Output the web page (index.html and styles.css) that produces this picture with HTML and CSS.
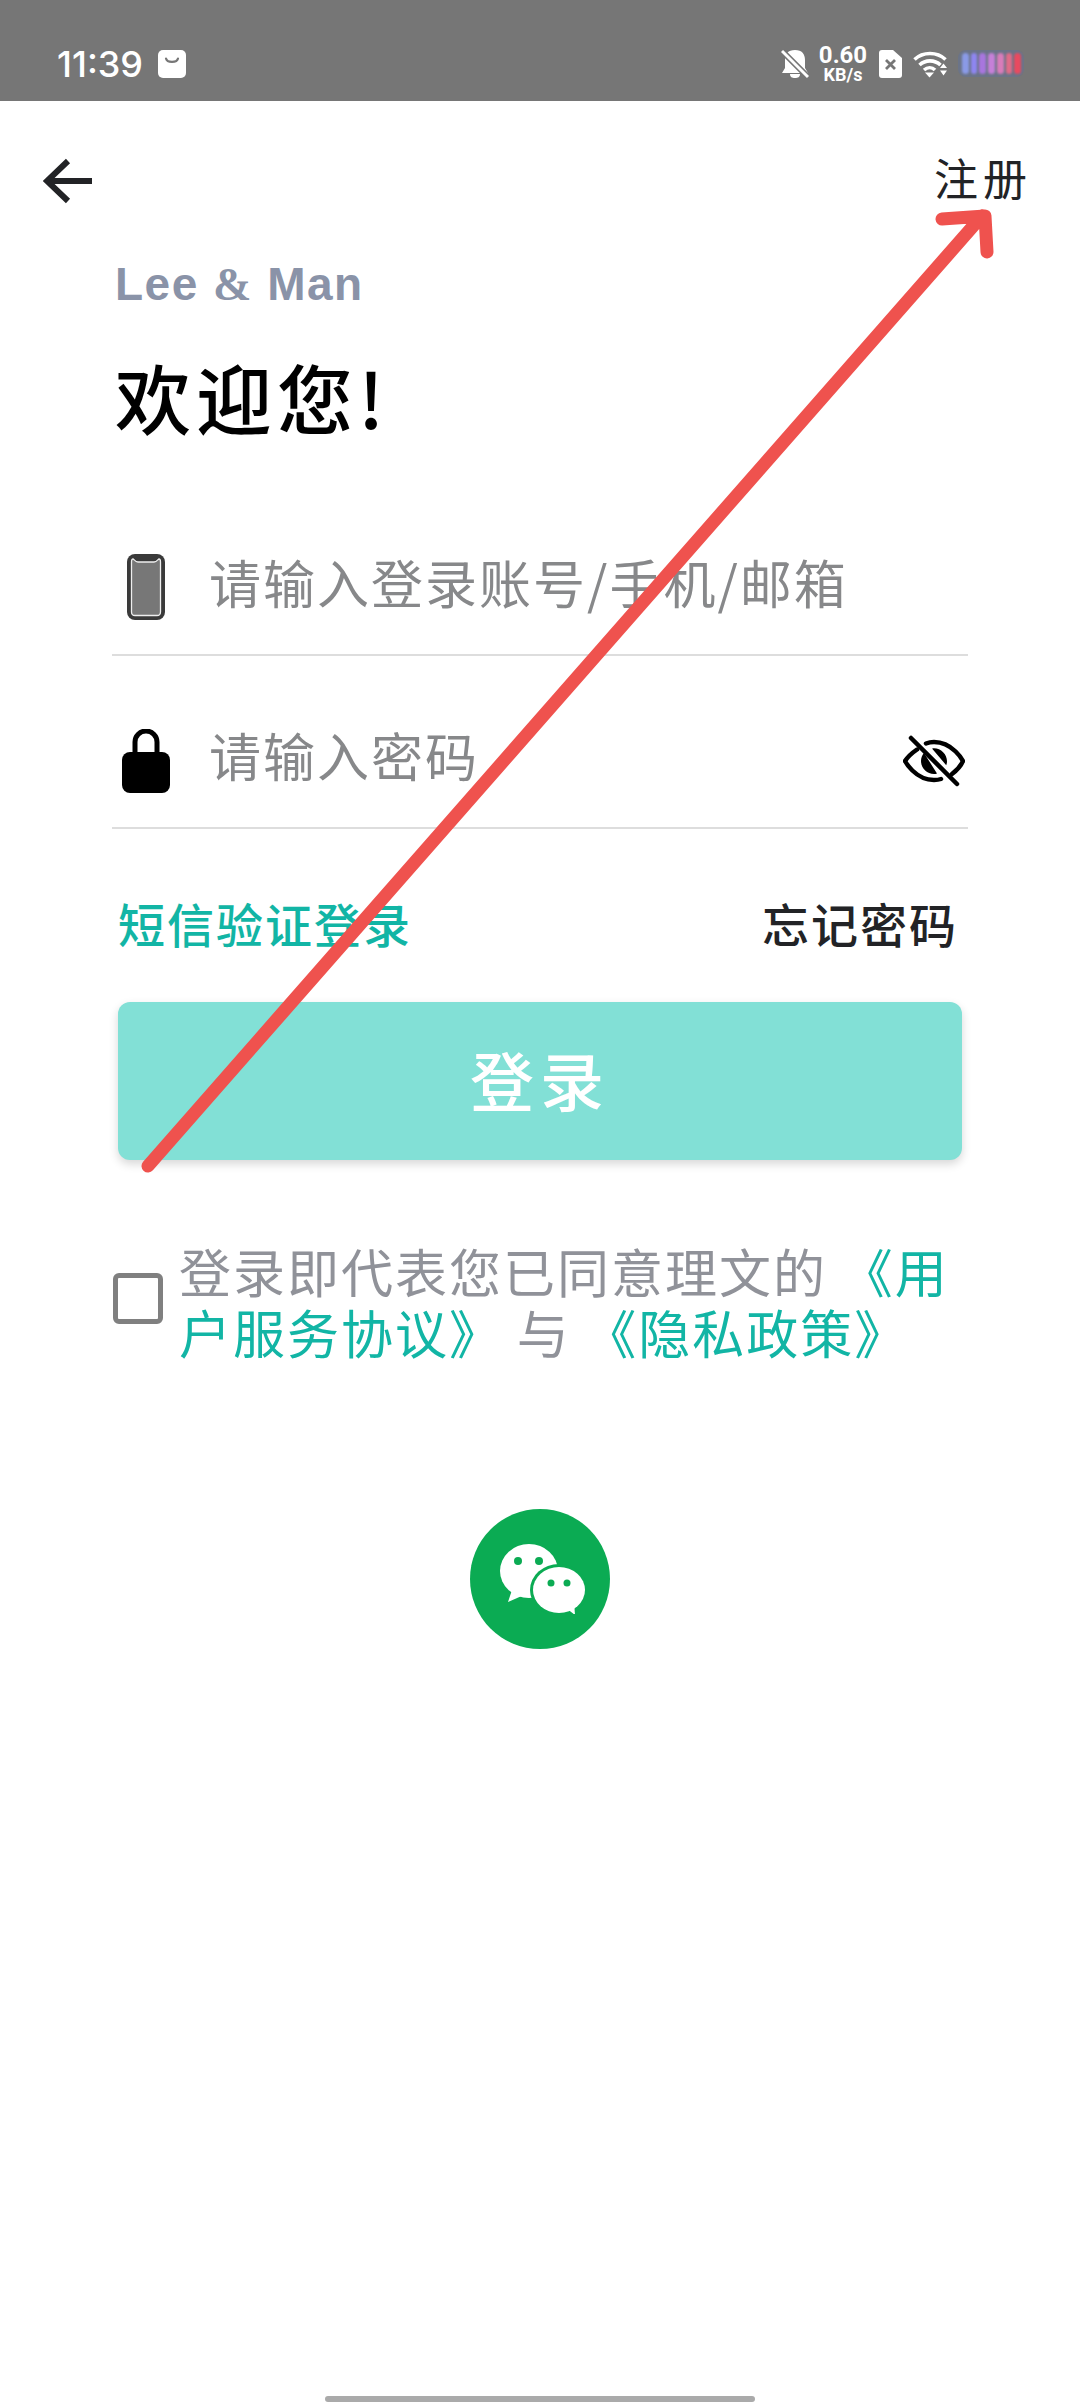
FILE: index.html
```html
<!DOCTYPE html>
<html lang="zh-CN">
<head>
    <meta charset="UTF-8">
    <meta name="viewport" content="width=device-width, initial-scale=1.0">
    <title>登录</title>
    <link rel="stylesheet" href="styles.css">
</head>
<body>
    <div class="page">
        <header class="status-bar">
            <div class="status-left">
                <span class="clock">11:39</span>
                <svg class="bag-icon" viewBox="0 0 28 28"><rect width="28" height="28" rx="5" fill="#fff"/><path d="M8 8.500c1 4.500 11 4.500 12 0" fill="none" stroke="#767676" stroke-width="2.200" stroke-linecap="round"/></svg>
            </div>
            <div class="status-right">
                <svg class="bell-icon" viewBox="0 0 28 30"><path d="M14 1c7 0 10 4 10 10v8l3 5H1l3-5v-8C4 5 7 1 14 1zM9 25h10c0 3-2 4-5 4s-5-1-5-4z" fill="#fff"/><path d="M1 2l26 26" stroke="#767676" stroke-width="6"/><path d="M1 2l26 26" stroke="#fff" stroke-width="3"/></svg>
                <div class="speed">
                    <span class="speed-num">0.60</span>
                    <span class="speed-unit">KB/s</span>
                </div>
                <svg class="sim-icon" viewBox="0 0 23 28"><path d="M3 0h11l9 8v17a3 3 0 0 1-3 3H3a3 3 0 0 1-3-3V3a3 3 0 0 1 3-3z" fill="#fff"/><path d="M7 10l9 9M16 10l-9 9" stroke="#767676" stroke-width="2.800"/></svg>
                <svg class="wifi-icon" viewBox="0 0 34 28"><g fill="none" stroke="#fff" stroke-width="3.600"><path d="M1.500 9.500C10 1.500 24 1.500 32.500 9.500"/><path d="M6.500 15C12.500 9.500 21.500 9.500 27.500 15"/><path d="M11 20c3.500-3 8-3 11 0"/></g><path d="M12 22.500h9l-4.500 5z" fill="#fff"/><path d="M27 18l3.500-4.500L34 18zM27 20.500h7l-3.500 5z" fill="#fff"/></svg>
                <div class="battery">
                    <i style="background:#8a9ae6"></i>
                    <i style="background:#8e86f0"></i>
                    <i style="background:#a876de"></i>
                    <i style="background:#c680d8"></i>
                    <i style="background:#d87cba"></i>
                    <i style="background:#e06c88"></i>
                    <i style="background:#e84a60"></i>
                </div>
            </div>
        </header>

        <nav class="top-nav">
            <svg class="back-icon" viewBox="0 0 50 46"><path d="M25 3L4 23l21 20M4 23h45" fill="none" stroke="#222326" stroke-width="6"/></svg>
            <a class="register-link">注册</a>
        </nav>

        <main class="login-box">
            <div class="brand">Lee <span class="amp">&amp;</span> Man</div>
            <h1 class="welcome">欢迎您!</h1>

            <div class="input-row first-row">
                <svg class="phone-icon" viewBox="0 0 40 68">
                    <rect x="1" y="1" width="38" height="66" rx="8" fill="#3a3a3a"/>
                    <path d="M7 6c1 0 2 3 5 3h16c3 0 4-3 5-3 1 0 1.500 1 1.500 3v50c0 2-1.500 3.500-3.500 3.500H9c-2 0-3.500-1.500-3.500-3.500V9c0-2 .5-3 1.500-3z" fill="#777" stroke="#eee" stroke-width="1.300"/>
                </svg>
                <input class="text-input" type="text" placeholder="请输入登录账号/手机/邮箱">
            </div>

            <div class="input-row">
                <svg class="lock-icon" viewBox="0 0 48 64">
                    <path d="M13 26V13a11 11 0 0 1 22 0v13" fill="none" stroke="#000" stroke-width="5"/>
                    <rect x="0" y="23" width="48" height="41" rx="8" fill="#000"/>
                </svg>
                <input class="text-input" type="password" placeholder="请输入密码">
                <svg class="eye-icon" viewBox="0 0 62 52">
                    <path d="M14 14.500C6 20 2 26 2 26s10 19 29 19c2.500 0 5-.3 7-1M23 8.500C25.500 7.500 28 7 31 7c19 0 29 19 29 19s-3 7-11 13" fill="none" stroke="#000" stroke-width="4.500" stroke-linecap="round"/>
                    <path d="M21 18c-2 2-3 5-3 8 0 7 6 13 13 13 1 0 2 0 3-.5zM29 13.500c1-.3 1.500-.3 2-.3 7 0 13 6 13 13 0 1.500-.3 3-.8 4z" fill="#000"/>
                    <path d="M8 3l46 46" stroke="#000" stroke-width="4.500" stroke-linecap="round"/>
                </svg>
            </div>

            <div class="link-row">
                <a class="sms-link">短信验证登录</a>
                <a class="forgot-link">忘记密码</a>
            </div>

            <button class="login-btn">登录</button>

            <div class="agree-row">
                <span class="check-box"></span>
                <p class="agree-text">登录即代表您已同意理文的 <a>《用户服务协议》</a> 与 <a>《隐私政策》</a></p>
            </div>

            <div class="social-row">
                <div class="wechat-btn">
                    <svg class="wechat-icon" viewBox="0 0 86 70">
                        <ellipse cx="29" cy="27" rx="29" ry="27" fill="#fff"/>
                        <path d="M12 46l-4 12 16-7z" fill="#fff"/>
                        <circle cx="18" cy="17" r="4" fill="#0bab53"/>
                        <circle cx="39" cy="17" r="4" fill="#0bab53"/>
                        <ellipse cx="59" cy="46" rx="29" ry="26" fill="#0bab53"/>
                        <ellipse cx="59" cy="46" rx="26" ry="23" fill="#fff"/>
                        <path d="M66 64l9 7-1-14z" fill="#fff"/>
                        <circle cx="51" cy="39" r="3.500" fill="#0bab53"/>
                        <circle cx="67" cy="39" r="3.500" fill="#0bab53"/>
                    </svg>
                </div>
            </div>
        </main>

        <div class="home-bar"></div>

        <!-- red annotation drawn over the page -->
        <svg class="annotation" viewBox="0 0 1080 2408">
            <path d="M148 1166L982 216M942 219l43-3 2 36" fill="none" stroke="#ef524e" stroke-width="13" stroke-linecap="round" stroke-linejoin="round"/>
        </svg>
    </div>
</body>
</html>
```

FILE: styles.css
```css
* {
    box-sizing: border-box;
}

body {
    margin: 0;
    background-color: white;
    font-family: "Noto Sans CJK SC", "Noto Sans", sans-serif;
}

.page {
    position: relative;
    display: flex;
    flex-direction: column;
    width: 1080px;
    height: 2408px;
    overflow: hidden;
}

.status-bar {
    display: flex;
    justify-content: space-between;
    align-items: center;
    flex: none;
    height: 101px;
    padding: 26px 56px 0 57px;
    background-color: #767676;
    color: white;
}

.status-left,
.status-right {
    display: flex;
    align-items: center;
}

.clock {
    font-family: Inter, Roboto, sans-serif;
    font-size: 36px;
    font-weight: 500;
    line-height: 44px;
}

.bag-icon {
    width: 28px;
    height: 28px;
    margin-left: 15px;
}

.bell-icon {
    width: 28px;
    height: 30px;
    margin-right: 8px;
}

.speed {
    display: flex;
    flex-direction: column;
    align-items: center;
    width: 52px;
    margin-right: 10px;
    font-family: Roboto, sans-serif;
    font-weight: 700;
}

.speed-num {
    font-size: 24px;
    line-height: 22px;
}

.speed-unit {
    font-size: 18px;
    line-height: 18px;
}

.sim-icon {
    width: 23px;
    height: 28px;
    margin-right: 11px;
}

.wifi-icon {
    width: 34px;
    height: 28px;
    margin-right: 11px;
}

.battery {
    display: flex;
    align-items: center;
    gap: 2px;
    width: 66px;
    height: 27px;
    padding: 0 3px 0 4px;
    border-radius: 8px;
    background-color: #6b7488;
}

.battery i {
    width: 7px;
    height: 21px;
    border-radius: 4px;
    filter: blur(1px);
}

.top-nav {
    display: flex;
    justify-content: space-between;
    align-items: center;
    flex: none;
    height: 116px;
    margin-top: 22px;
    padding: 0 48px 0 43px;
}

.back-icon {
    width: 50px;
    height: 46px;
}

.register-link {
    margin-bottom: 8px;
    font-size: 44px;
    line-height: 56px;
    letter-spacing: 5px;
    color: #222326;
}

.login-box {
    display: flex;
    flex-direction: column;
    padding: 0 112px;
}

.brand {
    margin-top: 20px;
    padding-left: 3px;
    font-family: "Liberation Sans", sans-serif;
    font-size: 46px;
    font-weight: 700;
    line-height: 50px;
    letter-spacing: 1.500px;
    color: #8a93a8;
}

.amp {
    font-family: "Liberation Serif", serif;
}

.welcome {
    margin: 41px 0 0;
    padding-left: 3px;
    font-size: 76px;
    font-weight: 500;
    line-height: 90px;
    letter-spacing: 5px;
    color: black;
}

.input-row {
    display: flex;
    align-items: center;
    height: 124px;
    margin-top: 49px;
    padding: 0 3px 24px 10px;
    border-bottom: 2px solid #dddddd;
}

.first-row {
    margin-top: 91px;
}

.text-input {
    flex: 1;
    min-width: 0;
    height: 70px;
    padding: 0;
    border: none;
    outline: none;
    font-family: inherit;
    font-size: 52px;
    letter-spacing: 2px;
    background: transparent;
}

.text-input::placeholder {
    color: #87888a;
}

.phone-icon {
    flex: none;
    width: 40px;
    height: 68px;
    margin: 12px 43px 0 4px;
}

.lock-icon {
    flex: none;
    width: 48px;
    height: 64px;
    margin: 14px 39px 0 0;
}

.eye-icon {
    flex: none;
    width: 62px;
    height: 52px;
    margin-top: 14px;
}

.link-row {
    display: flex;
    justify-content: space-between;
    align-items: center;
    margin-top: 64px;
    padding: 0 10px 0 6px;
    font-size: 47px;
    font-weight: 500;
    line-height: 60px;
    letter-spacing: 2px;
}

.sms-link {
    color: #12b5a5;
}

.forgot-link {
    color: #222326;
}

.login-btn {
    height: 158px;
    margin: 49px 6px 0;
    padding-bottom: 8px;
    border: none;
    border-radius: 12px;
    background-color: #82e0d6;
    box-shadow: 0 4px 10px rgba(0, 0, 0, 0.16);
    color: white;
    font-family: inherit;
    font-size: 64px;
    font-weight: 500;
    letter-spacing: 6px;
}

.agree-row {
    display: flex;
    align-items: center;
    margin-top: 80px;
}

.check-box {
    flex: none;
    width: 50px;
    height: 51px;
    margin: 0 16px 6px 1px;
    border: 5px solid #808080;
    border-radius: 6px;
}

.agree-text {
    margin: 0;
    font-size: 52px;
    line-height: 61px;
    letter-spacing: 2px;
    color: #909299;
}

.agree-text a {
    color: #12b5a5;
}

.social-row {
    display: flex;
    justify-content: center;
    margin-top: 147px;
}

.wechat-btn {
    display: flex;
    justify-content: center;
    align-items: center;
    width: 140px;
    height: 140px;
    border-radius: 50%;
    background-color: #0bab53;
}

.wechat-icon {
    width: 86px;
    height: 70px;
    margin-left: 6px;
}

.home-bar {
    width: 430px;
    height: 6px;
    margin: auto auto 6px;
    border-radius: 3px;
    background-color: #aaaaaa;
}

.annotation {
    position: absolute;
    top: 0;
    left: 0;
    width: 1080px;
    height: 2408px;
    pointer-events: none;
}
```
